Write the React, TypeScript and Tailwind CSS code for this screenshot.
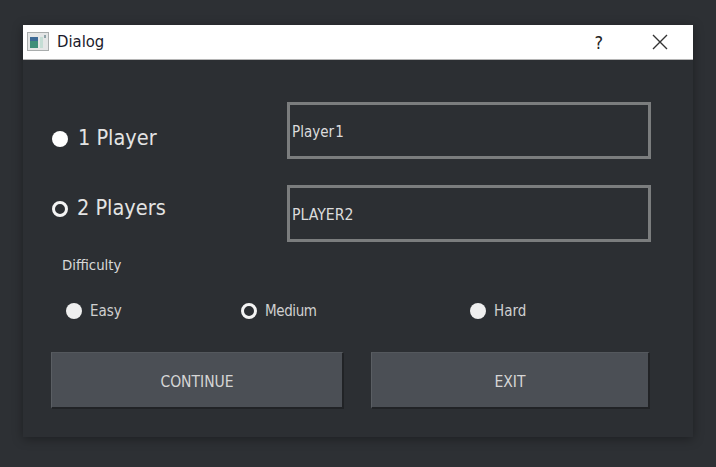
const font = "font-['Tahoma','DejaVu_Sans_Condensed','Noto_Sans',sans-serif]";

function Radio({ checked, soft }: { checked?: boolean; soft?: boolean }) {
  return (
    <span
      className={`block h-[16px] w-[16px] shrink-0 rounded-full ${
        checked
          ? "border-[3px] border-[#f4f4f4] bg-[#2c2f33]"
          : soft
            ? "bg-[#efefef]"
            : "bg-white"
      }`}
    />
  );
}

function WindowIcon() {
  return (
    <svg width="22" height="20" viewBox="0 0 22 20" className="shrink-0">
      <rect x="0.5" y="0.5" width="21" height="18" fill="#e4e6e6" stroke="#a9adad" />
      <rect x="3" y="5" width="8" height="11" fill="#3f8f7a" />
      <rect x="3" y="5" width="8" height="4" fill="#3d6a96" />
      <rect x="13" y="5" width="3" height="11" fill="#c4ddd4" />
      <rect x="17" y="3" width="2" height="3" fill="#8fa3a8" />
    </svg>
  );
}

function Field({ value, className }: { value: string; className?: string }) {
  return (
    <div
      className={`flex h-[57px] w-[364px] items-center border-[3px] border-[#7b7d7e] pt-[3px] pl-[2px] text-[#dcdcdc] ${className ?? ""}`}
    >
      {value}
    </div>
  );
}

function Button({ label, width }: { label: string; width: string }) {
  return (
    <button
      className={`flex h-[57px] items-center justify-center border-t border-r-2 border-b-2 border-l border-t-[#54585d] border-r-[#212326] border-b-[#212326] border-l-[#5a5e63] bg-[#4b4f55] pt-[6px] text-[15.5px] text-[#d6d6d6] ${width}`}
    >
      {label}
    </button>
  );
}

export default function App() {
  return (
    <div className={`h-[467px] w-[716px] overflow-hidden bg-[#2d3034] pt-[25px] pl-[23px] ${font}`}>
      <div className="h-[412px] w-[670px] bg-[#2c2f33] shadow-[0_2px_10px_rgba(0,0,0,0.35)]">
        <div className="flex h-[35px] items-center border-b border-[#b5b5b5] bg-white pl-[4px] text-[16.5px] text-[#1a1a2a]">
          <WindowIcon />
          <span className="ml-[8px]">Dialog</span>
          <span className="ml-auto text-[18px] text-[#222]">?</span>
          <svg width="16" height="16" viewBox="0 0 16 16" className="mr-[25px] ml-[49px]">
            <path d="M1 1 L15 15 M15 1 L1 15" stroke="#333" strokeWidth="1.4" fill="none" />
          </svg>
        </div>

        <div className="pt-[42px] pl-[28px]">
          <div className="flex h-[57px] items-center">
            <div className="flex w-[236px] items-center pt-[16px] pl-[1px] text-[21.5px] text-[#e4e4e4]">
              <Radio />
              <span className="ml-[10px]">1 Player</span>
            </div>
            <Field value="Player 1" className="text-[15px] [word-spacing:-3px]" />
          </div>

          <div className="mt-[26px] flex h-[57px] items-center">
            <div className="flex w-[236px] items-center pb-[10px] pl-[1px] text-[21.5px] text-[#e4e4e4]">
              <Radio checked />
              <span className="ml-[9px]">2 Players</span>
            </div>
            <Field value="PLAYER2" className="text-[15.7px]" />
          </div>

          <div className="mt-[14px] pl-[11px] text-[14.8px] leading-[18px] text-[#d8d8d8]">Difficulty</div>

          <div className="mt-[27px] flex h-[20px] items-center pl-[15px] text-[15px] text-[#d0d0d0]">
            <div className="flex w-[175px] items-center">
              <Radio soft />
              <span className="ml-[8px]">Easy</span>
            </div>
            <div className="flex w-[229px] items-center">
              <Radio checked />
              <span className="ml-[8px] tracking-[-0.4px]">Medium</span>
            </div>
            <div className="flex items-center">
              <Radio soft />
              <span className="ml-[8px]">Hard</span>
            </div>
          </div>

          <div className="mt-[31px] flex gap-[27px]">
            <Button label="CONTINUE" width="w-[293px]" />
            <Button label="EXIT" width="w-[279px]" />
          </div>
        </div>
      </div>
    </div>
  );
}
